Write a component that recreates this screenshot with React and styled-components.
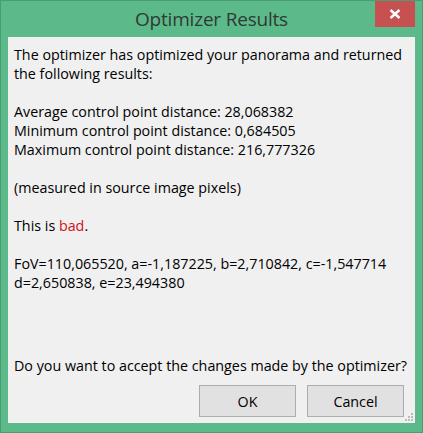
import React from "react";
import styled, { createGlobalStyle } from "styled-components";

const Global = createGlobalStyle`
  html, body { margin: 0; padding: 0; background: #5cb98a; }
  #root { width: 423px; height: 433px; }
`;

const Frame = styled.div`
  box-sizing: border-box;
  width: 423px;
  height: 433px;
  border: 1px solid #4a9c72;
  background: #5cb98a;
  display: flex;
  flex-direction: column;
  padding: 0 7px 9px 7px;
  font-family: "Open Sans", "Noto Sans", sans-serif;
`;

const TitleBar = styled.div`
  height: 36px;
  display: grid;
  grid-template-columns: 1fr auto 1fr;
  align-items: start;
`;

const Title = styled.div`
  grid-column: 2;
  font-size: 19px;
  line-height: 37px;
  color: #2f3a35;
  letter-spacing: -0.2px;
`;

const Close = styled.div`
  grid-column: 3;
  justify-self: end;
  width: 40px;
  height: 26px;
  background: #c75050;
  display: flex;
  align-items: center;
  justify-content: center;
`;

const Client = styled.div`
  position: relative;
  flex: 1;
  background: #f0f0f0;
  display: flex;
  flex-direction: column;
  padding: 8px 11px 6px 6px;
  color: #000;
  font-size: 14.3px;
  line-height: 19px;
`;

const Line = styled.div`
  min-height: 19px;
  white-space: nowrap;
`;

const Bad = styled.span`
  color: #d0101c;
`;

const Spacer = styled.div`
  flex: 1;
`;

const Question = styled.div`
  white-space: nowrap;
  margin-bottom: 10px;
`;

const Buttons = styled.div`
  display: flex;
  justify-content: flex-end;
  gap: 11px;
`;

const Button = styled.button`
  box-sizing: border-box;
  width: 97px;
  height: 32px;
  border: 1px solid #adadad;
  background: #e1e1e1;
  font-family: inherit;
  font-size: 14.3px;
  color: #000;
  padding: 0;
`;

const Grip = styled.svg`
  position: absolute;
  right: 1px;
  bottom: 1px;
`;

function CloseIcon() {
  return (
    <svg width="12" height="10" viewBox="0 0 12 10">
      <path d="M1.5 1 L10.5 9 M10.5 1 L1.5 9" stroke="#fff" strokeWidth="2.4" />
    </svg>
  );
}

function SizeGrip() {
  const dots = [
    [7, 1], [7, 4], [4, 4], [7, 7], [4, 7], [1, 7],
  ];
  return (
    <Grip width="10" height="10" viewBox="0 0 10 10">
      {dots.map(([x, y], i) => (
        <rect key={i} x={x} y={y} width="2" height="2" fill="#bcbcbc" />
      ))}
    </Grip>
  );
}

export default function App() {
  return (
    <>
      <Global />
      <Frame>
        <TitleBar>
          <Title>Optimizer Results</Title>
          <Close>
            <CloseIcon />
          </Close>
        </TitleBar>
        <Client>
          <Line>The optimizer has optimized your panorama and returned</Line>
          <Line>the following results:</Line>
          <Line />
          <Line>Average control point distance: 28,068382</Line>
          <Line>Minimum control point distance: 0,684505</Line>
          <Line>Maximum control point distance: 216,777326</Line>
          <Line />
          <Line>(measured in source image pixels)</Line>
          <Line />
          <Line>
            This is <Bad>bad</Bad>.
          </Line>
          <Line />
          <Line>FoV=110,065520, a=-1,187225, b=2,710842, c=-1,547714</Line>
          <Line>d=2,650838, e=23,494380</Line>
          <Spacer />
          <Question>Do you want to accept the changes made by the optimizer?</Question>
          <Buttons>
            <Button>OK</Button>
            <Button>Cancel</Button>
          </Buttons>
          <SizeGrip />
        </Client>
      </Frame>
    </>
  );
}
